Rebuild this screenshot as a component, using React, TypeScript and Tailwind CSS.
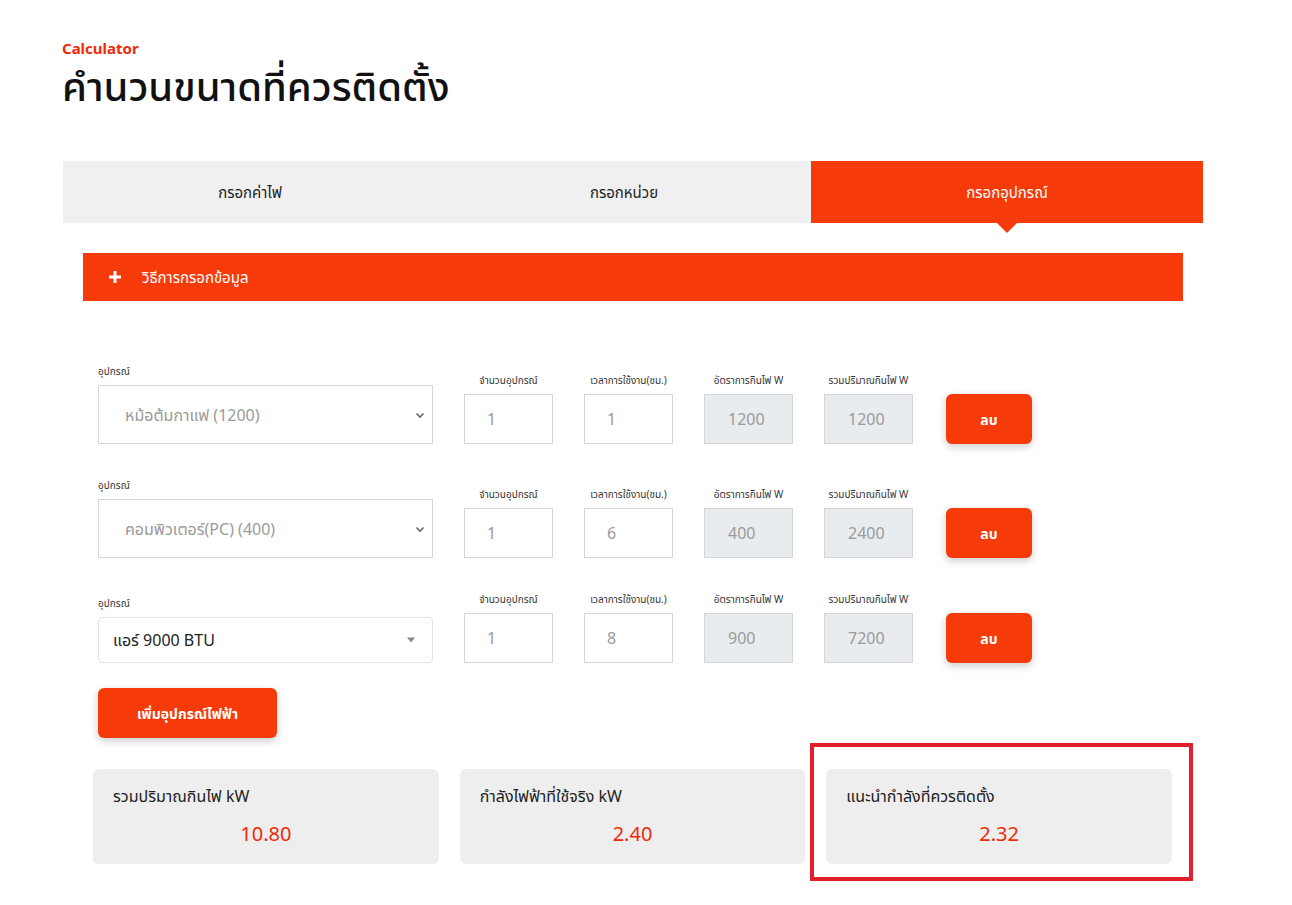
import React from 'react';

const ORANGE = 'bg-[#f63a09]';

interface Row {
  name: string;
  qty: string;
  hours: string;
  rate: string;
  total: string;
  modern?: boolean;
}

const rows: Row[] = [
  { name: 'หม้อต้มกาแฟ (1200)', qty: '1', hours: '1', rate: '1200', total: '1200' },
  { name: 'คอมพิวเตอร์(PC) (400)', qty: '1', hours: '6', rate: '400', total: '2400' },
  { name: 'แอร์ 9000 BTU', qty: '1', hours: '8', rate: '900', total: '7200', modern: true },
];

const Field: React.FC<{ label: string; value: string; readOnly?: boolean }> = ({ label, value, readOnly }) => (
  <div className="flex flex-col items-center w-[89px]">
    <span className="text-[10px] leading-[14px] mb-[7px] text-[#333] whitespace-nowrap">{label}</span>
    <div
      className={`w-full h-[50px] border border-[#d6d6d6] flex items-center text-[16px] text-[#9a9a9a] ${
        readOnly ? 'bg-[#e9ecef] pl-[23px]' : 'bg-white pl-[22px]'
      }`}
    >
      {value}
    </div>
  </div>
);

const DeviceRow: React.FC<{ row: Row }> = ({ row }) => (
  <div className="flex items-end">
    <div className="flex flex-col w-[335px]">
      <span className="text-[10px] leading-[14px] mb-[7px] text-[#333]">อุปกรณ์</span>
      {row.modern ? (
        <div className="h-[46px] bg-white border border-[#e3e3e3] rounded-[4px] flex items-center justify-between pl-[14px] pr-[16px]">
          <span className="text-[16px] text-[#222]">{row.name}</span>
          <svg width="10" height="6" viewBox="0 0 10 6">
            <path d="M1 0.5h8L5 5.5z" fill="#888" />
          </svg>
        </div>
      ) : (
        <div className="h-[59px] bg-white border border-[#d6d6d6] flex items-center justify-between pl-[26px] pr-[6px]">
          <span className="text-[16px] text-[#9a9a9a]">{row.name}</span>
          <svg width="12" height="12" viewBox="0 0 12 12">
            <path d="M2.5 4.5L6 8l3.5-3.5" fill="none" stroke="#666" strokeWidth="1.6" />
          </svg>
        </div>
      )}
    </div>
    <div className="flex items-end gap-[31px] ml-[31px]">
      <Field label="จำนวนอุปกรณ์" value={row.qty} />
      <Field label="เวลาการใช้งาน(ชม.)" value={row.hours} />
      <Field label="อัตราการกินไฟ W" value={row.rate} readOnly />
      <Field label="รวมปริมาณกินไฟ W" value={row.total} readOnly />
    </div>
    <button
      className={`ml-[33px] w-[86px] h-[50px] ${ORANGE} rounded-[6px] text-white font-bold text-[14px] shadow-[0_3px_8px_rgba(0,0,0,0.2)]`}
    >
      ลบ
    </button>
  </div>
);

const ResultCard: React.FC<{ title: string; value: string; highlight?: boolean }> = ({ title, value, highlight }) => (
  <div className="relative h-[95px] bg-[#eeeeee] rounded-[6px] px-[20px] pt-[16px]">
    <div className="text-[16px] text-[#222] leading-[22px]">{title}</div>
    <div className="text-center text-[20px] text-[#ef2a09] mt-[14px] leading-[26px]">{value}</div>
    {highlight && (
      <div className="absolute -left-[16px] -right-[21px] -top-[26px] -bottom-[17px] border-4 border-[#e31e2d] pointer-events-none" />
    )}
  </div>
);

export default function App() {
  return (
    <div
      className="min-h-screen bg-white text-[#222] pl-[63px] pt-[39px] pb-[30px]"
      style={{ fontFamily: '"Noto Sans", "Noto Sans Thai", "Liberation Sans", sans-serif' }}
    >
      <div className="w-[1140px]">
        <div className="text-[#f02a0a] font-bold text-[15px] leading-[18px] -ml-[1px]">Calculator</div>
        <h1 className="text-[40px] font-medium leading-[50px] text-[#111] mt-[4px] -ml-[1px]">คำนวนขนาดที่ควรติดตั้ง</h1>

        <div className="flex mt-[50px] h-[62px]">
          <div className="w-[374px] bg-[#f0f0f0] flex items-center justify-center text-[15px]">กรอกค่าไฟ</div>
          <div className="w-[374px] bg-[#f0f0f0] flex items-center justify-center text-[15px]">กรอกหน่วย</div>
          <div className={`relative w-[392px] ${ORANGE} flex items-center justify-center text-[15px] text-white`}>
            กรอกอุปกรณ์
            <div className="absolute left-1/2 -translate-x-1/2 top-full w-0 h-0 border-l-[10px] border-r-[10px] border-t-[10px] border-l-transparent border-r-transparent border-t-[#f63a09]" />
          </div>
        </div>

        <div className="px-[20px] mt-[30px]">
          <div className={`${ORANGE} h-[48px] flex items-center pl-[25px] text-white text-[15px]`}>
            <svg width="14" height="14" viewBox="0 0 14 14" className="mr-[20px]">
              <path d="M7 1v12M1 7h12" stroke="#fff" strokeWidth="3" />
            </svg>
            วิธีการกรอกข้อมูล
          </div>
        </div>

        <div className="pl-[35px] mt-[63px] flex flex-col gap-[34px]">
          {rows.map((r, i) => (
            <DeviceRow key={i} row={r} />
          ))}
        </div>

        <div className="pl-[35px] mt-[25px]">
          <button
            className={`w-[179px] h-[50px] ${ORANGE} rounded-[6px] text-white font-bold text-[14px] shadow-[0_3px_8px_rgba(0,0,0,0.2)]`}
          >
            เพิ่มอุปกรณ์ไฟฟ้า
          </button>
        </div>

        <div className="ml-[30px] mt-[31px] w-[1079px] grid grid-cols-3 gap-[21px]">
          <ResultCard title="รวมปริมาณกินไฟ kW" value="10.80" />
          <ResultCard title="กำลังไฟฟ้าที่ใช้จริง kW" value="2.40" />
          <ResultCard title="แนะนำกำลังที่ควรติดตั้ง" value="2.32" highlight />
        </div>
      </div>
    </div>
  );
}
